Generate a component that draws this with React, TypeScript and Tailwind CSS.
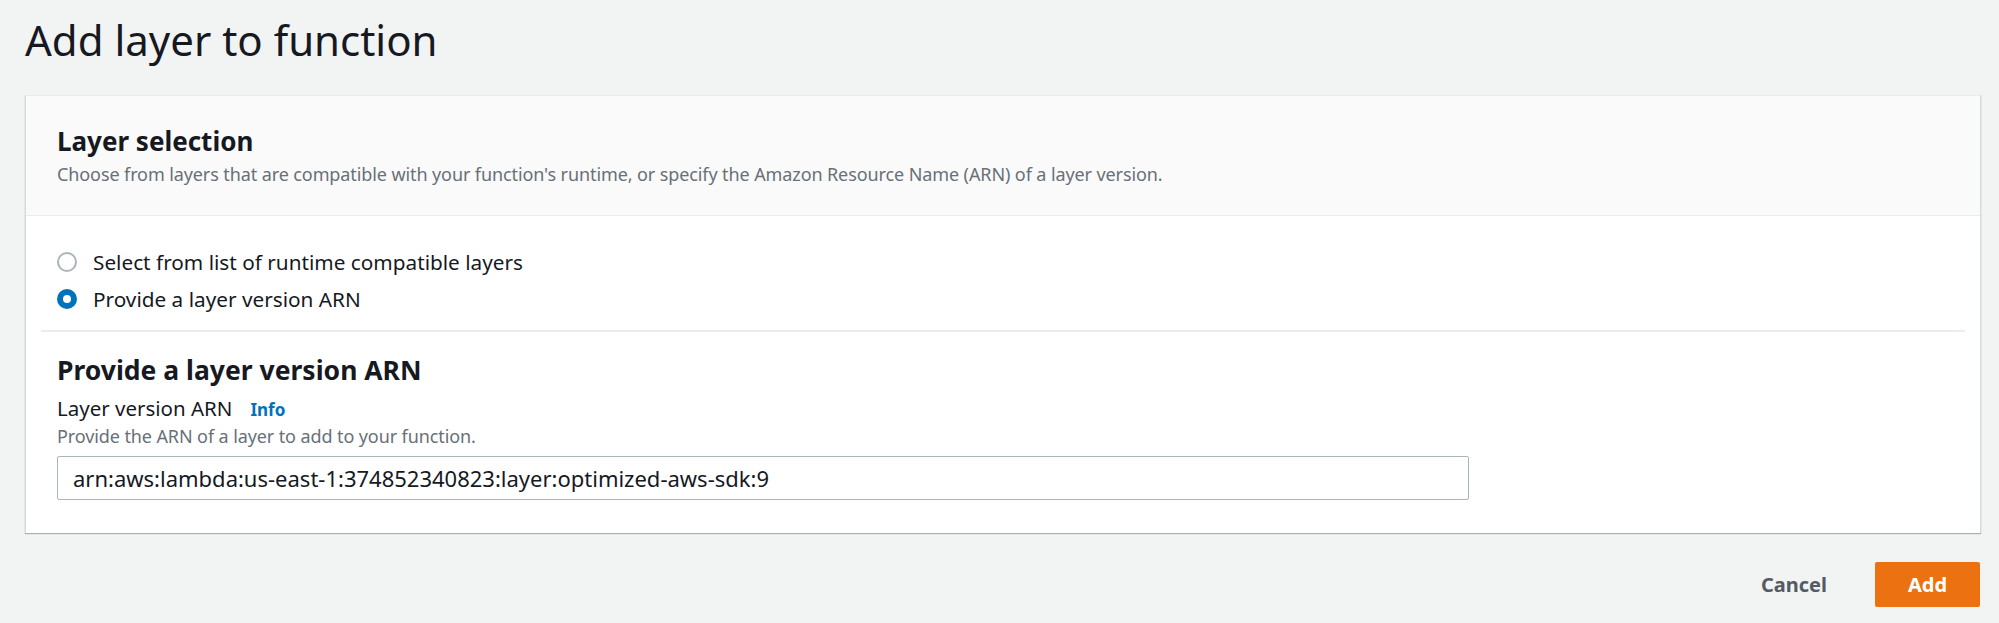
import React from "react";

const FONT = { fontFamily: '"Noto Sans", "Open Sans", "Liberation Sans", sans-serif' };

const Radio = ({checked, label}: {checked: boolean; label: string}) => (
    <label className="flex items-center h-[28px] gap-[16px] cursor-pointer">
        {checked ? (
            <span className="w-[20px] h-[20px] rounded-full bg-[#0073bb] flex items-center justify-center shrink-0">
                <span className="w-[8px] h-[8px] rounded-full bg-white"/>
            </span>
        ) : (
            <span className="w-[20px] h-[20px] rounded-full border-2 border-[#aab7b8] bg-white shrink-0"/>
        )}
        <span className="text-[20.75px] leading-[28px] text-[#16191f]">{label}</span>
    </label>
);

export default function App() {
    return (
        <div className="min-h-screen bg-[#f2f3f3] pl-[25px] pr-[18px] pt-[12px]" style={FONT}>
            <h1 className="text-[42px] leading-[56px] text-[#16191f] font-normal">Add layer to function</h1>

            {/* Card */}
            <div className="mt-[27px] bg-white border-l border-r border-[#d5dbdb] shadow-[0_1px_1px_0_rgba(0,28,36,0.3)]">
                <div className="bg-[#fafafa] border-t border-[#eaeded] border-b px-[31px] pt-[27px] pb-[29px]">
                    <h2 className="text-[26px] leading-[36px] font-bold text-[#16191f]">Layer selection</h2>
                    <p className="mt-[3px] text-[18px] leading-[24px] tracking-[-0.1px] text-[#687078]">
                        Choose from layers that are compatible with your function's runtime, or specify the Amazon Resource Name (ARN) of a layer version.
                    </p>
                </div>

                <div className="px-[15px]">
                    <div className="px-[16px] pt-[32px] pb-[17px] flex flex-col gap-[9px]">
                        <Radio checked={false} label="Select from list of runtime compatible layers"/>
                        <Radio checked={true} label="Provide a layer version ARN"/>
                    </div>

                    <div className="h-[2px] bg-[#eaeded]"/>

                    <div className="px-[16px] pt-[20px] pb-[33px]">
                        <h3 className="text-[26.5px] leading-[36px] font-bold text-[#16191f]">Provide a layer version ARN</h3>
                        <div className="mt-[6px] flex items-baseline gap-[18px]">
                            <span className="text-[20.5px] leading-[28px] text-[#16191f]">Layer version ARN</span>
                            <a className="text-[17px] leading-[28px] font-bold text-[#0073bb]">Info</a>
                        </div>
                        <p className="text-[18px] leading-[24px] tracking-[-0.1px] text-[#687078]">Provide the ARN of a layer to add to your function.</p>
                        <input
                            className="mt-[8px] w-[1412px] h-[44px] border border-[#aab7b8] rounded-[2px] px-[15px] text-[22px] text-[#16191f] bg-white outline-none"
                            defaultValue="arn:aws:lambda:us-east-1:374852340823:layer:optimized-aws-sdk:9"
                            style={FONT}
                        />
                    </div>
                </div>
            </div>

            {/* Actions */}
            <div className="mt-[29px] flex justify-end items-center gap-[48px] pr-[1px]">
                <button className="text-[20px] font-bold text-[#545b64]">Cancel</button>
                <button className="w-[105px] h-[45px] rounded-[2px] bg-[#ec7211] text-white text-[20px] font-bold">Add</button>
            </div>
        </div>
    );
}
